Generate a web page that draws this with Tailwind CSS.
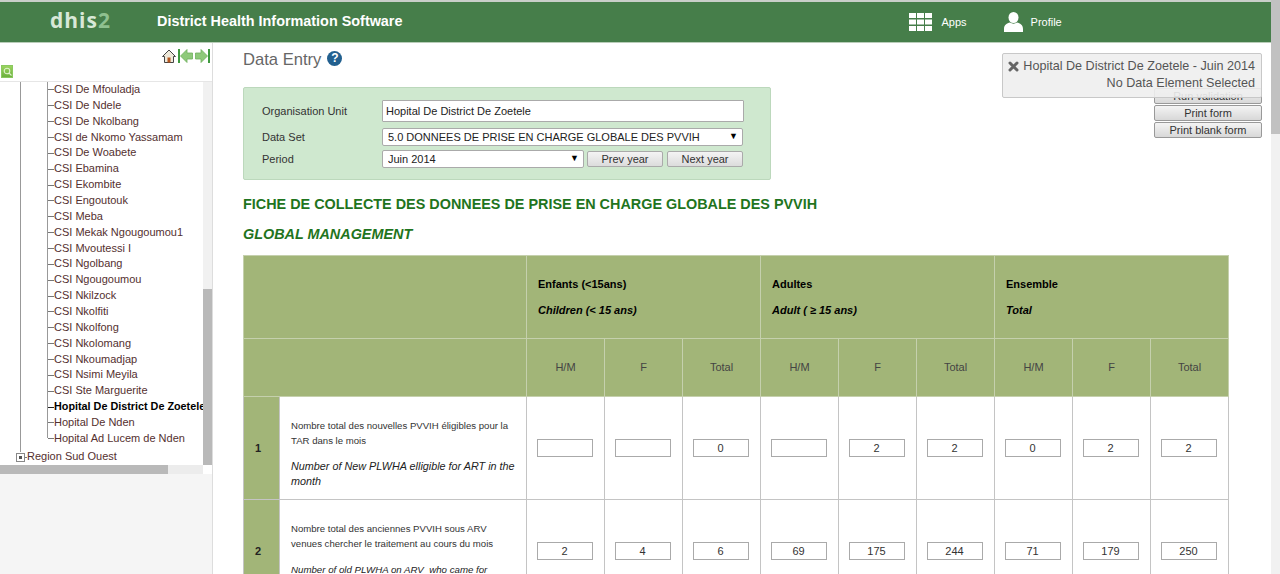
<!DOCTYPE html>
<html lang="en">
<head>
<meta charset="UTF-8">
<title>Data Entry</title>
<script src="https://cdn.jsdelivr.net/npm/@tailwindcss/browser@4"></script>
</head>
<body class="h-[574px] w-[1280px] overflow-hidden bg-white font-['Liberation_Sans',Arial,sans-serif] text-[#333] flex">

<div class="w-[1271px] shrink-0">
  <header class="h-[43px] border-t-2 border-b border-t-[#c9cfc9] border-b-[#b9cdb9] bg-[#467e4a] flex items-center text-white">
    <div class="w-[157px] pl-[50px] text-[21px] font-['Open_Sans',sans-serif] font-bold tracking-[1px] text-[#d8e8d8] -mt-[2px]">dhis<span class="text-[#8fc08f]">2</span></div>
    <div class="text-[14.4px] font-bold">District Health Information Software</div>
    <div class="ml-[507px] flex items-center gap-2">
      <svg width="23" height="18" viewBox="0 0 23 18" fill="#fff"><rect x="0" y="0" width="7" height="5"/><rect x="8" y="0" width="7" height="5"/><rect x="16" y="0" width="7" height="5"/><rect x="0" y="6.500" width="7" height="5"/><rect x="8" y="6.500" width="7" height="5"/><rect x="16" y="6.500" width="7" height="5"/><rect x="0" y="13" width="7" height="5"/><rect x="8" y="13" width="7" height="5"/><rect x="16" y="13" width="7" height="5"/></svg>
      <span class="text-[11px] ml-[1px]">Apps</span>
    </div>
    <div class="ml-[37px] flex items-center gap-[8px]">
      <svg width="19" height="20" viewBox="0 0 19 20" fill="#fff"><ellipse cx="9.500" cy="5.500" rx="5" ry="5.500"/><path d="M0 20v-3c0-4 3-6 6-6.500 2 1.500 5 1.500 7 0 3 .5 6 2.500 6 6.500v3z"/></svg>
      <span class="text-[11px]">Profile</span>
    </div>
  </header>

  <div class="flex h-[531px]">
    <aside class="w-[213px] shrink-0 border-r border-[#ddd] bg-[#f5f5f5]">
      <div class="h-[39px] bg-white border-b border-[#e6e6e6] relative">
        <div class="absolute left-[162px] top-[6px] flex items-center gap-[2px]">
          <svg width="14" height="14" viewBox="0 0 14 14"><path d="M7 1 0.500 7.500h2v6h9v-6h2z" fill="#eee9da" stroke="#444"/><rect x="5.500" y="8.500" width="3" height="5" fill="#b5561f"/></svg>
          <svg width="15" height="14" viewBox="0 0 15 14"><rect x="0" y="0" width="2" height="14" fill="#3f9a3f"/><path d="M2.500 7L9 .5v3.500h5.500v6H9v3.500z" fill="#8ec97a" stroke="#6fb05e" stroke-width=".8"/></svg>
          <svg width="15" height="14" viewBox="0 0 15 14"><rect x="13" y="0" width="2" height="14" fill="#3f9a3f"/><path d="M12.500 7L6 .5v3.500H.5v6H6v3.500z" fill="#8ec97a" stroke="#6fb05e" stroke-width=".8"/></svg>
        </div>
        <div class="absolute left-[1px] top-[22px] w-[12px] h-[13px] bg-linear-to-b from-[#9ad45e] to-[#6cb03e] border border-[#8ac860] flex items-center justify-center">
          <svg width="9" height="9" viewBox="0 0 9 9" fill="none" stroke="#dff2cc" stroke-width="1.100"><circle cx="4" cy="4" r="2.800"/><path d="M6 6l2.500 2.500"/></svg>
        </div>
      </div>
      <div class="h-[383px] flex bg-white">
        <div class="w-[203px] overflow-hidden text-[11px] leading-[15.86px] text-[#54302f] whitespace-nowrap">
          <div class="ml-[20px] h-[370px] border-l border-[#999]">
            <ul class="ml-[26px] h-[356px] border-l border-[#999]">
              <li class="h-[15.86px] flex items-center"><span class="w-[6px] shrink-0 h-px bg-[#777]"></span>CSI De Mfouladja</li>
              <li class="h-[15.86px] flex items-center"><span class="w-[6px] shrink-0 h-px bg-[#777]"></span>CSI De Ndele</li>
              <li class="h-[15.86px] flex items-center"><span class="w-[6px] shrink-0 h-px bg-[#777]"></span>CSI De Nkolbang</li>
              <li class="h-[15.86px] flex items-center"><span class="w-[6px] shrink-0 h-px bg-[#777]"></span>CSI de Nkomo Yassamam</li>
              <li class="h-[15.86px] flex items-center"><span class="w-[6px] shrink-0 h-px bg-[#777]"></span>CSI De Woabete</li>
              <li class="h-[15.86px] flex items-center"><span class="w-[6px] shrink-0 h-px bg-[#777]"></span>CSI Ebamina</li>
              <li class="h-[15.86px] flex items-center"><span class="w-[6px] shrink-0 h-px bg-[#777]"></span>CSI Ekombite</li>
              <li class="h-[15.86px] flex items-center"><span class="w-[6px] shrink-0 h-px bg-[#777]"></span>CSI Engoutouk</li>
              <li class="h-[15.86px] flex items-center"><span class="w-[6px] shrink-0 h-px bg-[#777]"></span>CSI Meba</li>
              <li class="h-[15.86px] flex items-center"><span class="w-[6px] shrink-0 h-px bg-[#777]"></span>CSI Mekak Ngougoumou1</li>
              <li class="h-[15.86px] flex items-center"><span class="w-[6px] shrink-0 h-px bg-[#777]"></span>CSI Mvoutessi I</li>
              <li class="h-[15.86px] flex items-center"><span class="w-[6px] shrink-0 h-px bg-[#777]"></span>CSI Ngolbang</li>
              <li class="h-[15.86px] flex items-center"><span class="w-[6px] shrink-0 h-px bg-[#777]"></span>CSI Ngougoumou</li>
              <li class="h-[15.86px] flex items-center"><span class="w-[6px] shrink-0 h-px bg-[#777]"></span>CSI Nkilzock</li>
              <li class="h-[15.86px] flex items-center"><span class="w-[6px] shrink-0 h-px bg-[#777]"></span>CSI Nkolfiti</li>
              <li class="h-[15.86px] flex items-center"><span class="w-[6px] shrink-0 h-px bg-[#777]"></span>CSI Nkolfong</li>
              <li class="h-[15.86px] flex items-center"><span class="w-[6px] shrink-0 h-px bg-[#777]"></span>CSI Nkolomang</li>
              <li class="h-[15.86px] flex items-center"><span class="w-[6px] shrink-0 h-px bg-[#777]"></span>CSI Nkoumadjap</li>
              <li class="h-[15.86px] flex items-center"><span class="w-[6px] shrink-0 h-px bg-[#777]"></span>CSI Nsimi Meyila</li>
              <li class="h-[15.86px] flex items-center"><span class="w-[6px] shrink-0 h-px bg-[#777]"></span>CSI Ste Marguerite</li>
              <li class="h-[15.86px] flex items-center font-bold text-black text-[10.800px]"><span class="w-[6px] shrink-0 h-px bg-[#222]"></span>Hopital De District De Zoetele</li>
              <li class="h-[15.86px] flex items-center"><span class="w-[6px] shrink-0 h-px bg-[#777]"></span>Hopital De Nden</li>
              <li class="h-[15.86px] flex items-center"><span class="w-[6px] shrink-0 h-px bg-[#777]"></span>Hopital Ad Lucem de Nden</li>
            </ul>
          </div>
          <div class="ml-[16px] -mt-[3px] h-[16px] flex items-center">
            <span class="w-[9px] h-[9px] border border-[#888] bg-white flex items-center justify-center"><span class="w-[3px] h-[3px] bg-[#555]"></span></span>
            <span class="w-[2px] h-px bg-[#777]"></span>Region Sud Ouest
          </div>
        </div>
        <div class="w-[9px] flex flex-col justify-end bg-[#f1f1f1]"><div class="h-[176px] bg-[#b9b9b9]"></div></div>
      </div>
      <div class="h-[9px] flex bg-white">
        <div class="w-[168px] bg-[#b9b9b9]"></div>
        <div class="w-[35px] bg-[#ececec]"></div>
      </div>
    </aside>

    <main class="relative flex-1 pl-[30px] overflow-hidden">
      <div class="absolute right-[9px] top-[10px] z-10 w-[260px] h-[45px] bg-[#eeeeee]/90 border border-[#c8c8c8] rounded-[2px] text-[12.6px] leading-[17px] text-right text-[#555] pt-[4px] pr-[6px]">
        <div class="flex justify-end items-center gap-[4px]">
          <svg width="11" height="11" viewBox="0 0 11 11" stroke="#666" stroke-width="3" stroke-linecap="round"><path d="M2 2l7 7M9 2l-7 7"/></svg>
          <span>Hopital De District De Zoetele - Juin 2014</span>
        </div>
        <div>No Data Element Selected</div>
      </div>

      <div class="flex justify-between pr-[9px]">
        <div class="w-[528px]">
          <div class="h-[44px] pt-[7px] flex items-start gap-[6px]">
            <h2 class="text-[16.600px] leading-[20px] text-[#666]">Data Entry</h2>
            <span class="mt-[1px] w-[15px] h-[15px] rounded-full bg-[#22608f] text-white text-[12px] leading-[15px] font-bold text-center">?</span>
          </div>
          <div class="h-[93px] bg-[#cfe8cf] border border-[#bcd8bc] rounded-[2px] pl-[18px] pt-[12px] text-[11px] text-[#333]">
            <div class="flex items-center h-[22px]">
              <label class="w-[120px]">Organisation Unit</label>
              <input class="w-[362px] h-[22px] bg-white border border-[#aaa] rounded-[1px] px-[3px] text-[11px] text-[#222]" value="Hopital De District De Zoetele">
            </div>
            <div class="flex items-center h-[18px] mt-[6px]">
              <label class="w-[120px]">Data Set</label>
              <div class="relative">
                <select class="appearance-none block w-[361px] h-[18px] bg-white border border-[#aaa] rounded-[2px] pl-[5px] text-[11px] text-[#222]"><option>5.0 DONNEES DE PRISE EN CHARGE GLOBALE DES PVVIH</option></select>
                <span class="absolute right-[5px] top-[1px] text-[9px] leading-[14px] text-black">▼</span>
              </div>
            </div>
            <div class="flex items-center h-[18px] mt-[4px]">
              <label class="w-[120px]">Period</label>
              <div class="relative">
                <select class="appearance-none block w-[202px] h-[18px] bg-white border border-[#aaa] rounded-[2px] pl-[5px] text-[11px] text-[#222]"><option>Juin 2014</option></select>
                <span class="absolute right-[5px] top-[1px] text-[9px] leading-[14px] text-black">▼</span>
              </div>
              <button class="ml-[3px] w-[76px] h-[16px] border border-[#aaa] rounded-[2px] bg-linear-to-b from-[#f4f4f4] to-[#dcdcdc] text-[11px] leading-[14px] text-[#333]">Prev year</button>
              <button class="ml-[4px] w-[76px] h-[16px] border border-[#aaa] rounded-[2px] bg-linear-to-b from-[#f4f4f4] to-[#dcdcdc] text-[11px] leading-[14px] text-[#333]">Next year</button>
            </div>
          </div>
        </div>
        <div class="w-[108px] pt-[45px] flex flex-col gap-px">
          <button class="h-[16px] border border-[#999] rounded-[2px] bg-linear-to-b from-[#f4f4f4] to-[#d8d8d8] text-[11px] leading-[14px] text-[#333]">Run validation</button>
          <button class="h-[16px] border border-[#999] rounded-[2px] bg-linear-to-b from-[#f4f4f4] to-[#d8d8d8] text-[11px] leading-[14px] text-[#333]">Print form</button>
          <button class="h-[16px] border border-[#999] rounded-[2px] bg-linear-to-b from-[#f4f4f4] to-[#d8d8d8] text-[11px] leading-[14px] text-[#333]">Print blank form</button>
        </div>
      </div>

      <h3 class="mt-[16px] text-[14.4px] leading-[16px] font-bold text-[#1f7420]">FICHE DE COLLECTE DES DONNEES DE PRISE EN CHARGE GLOBALE DES PVVIH</h3>
      <h4 class="mt-[14px] text-[14.4px] leading-[16px] font-bold italic text-[#1f7420]">GLOBAL MANAGEMENT</h4>

      <table class="mt-[13px] w-[986px] table-fixed border-collapse text-[11px] text-[#333]">
        <colgroup>
          <col class="w-[36px]"><col class="w-[247px]">
          <col class="w-[78px]"><col class="w-[78px]"><col class="w-[78px]">
          <col class="w-[78px]"><col class="w-[78px]"><col class="w-[78px]">
          <col class="w-[78px]"><col class="w-[78px]"><col class="w-[78px]">
        </colgroup>
        <tr class="h-[83px] bg-[#a2b578] text-black">
          <td colspan="2" class="border border-[#c5d0ad]"></td>
          <td colspan="3" class="border border-[#c5d0ad] pl-[11px] font-bold"><p>Enfants (&lt;15ans)</p><p class="mt-[9px] italic">Children (&lt; 15 ans)</p></td>
          <td colspan="3" class="border border-[#c5d0ad] pl-[11px] font-bold"><p>Adultes</p><p class="mt-[9px] italic">Adult ( ≥ 15 ans)</p></td>
          <td colspan="3" class="border border-[#c5d0ad] pl-[11px] font-bold"><p>Ensemble</p><p class="mt-[9px] italic">Total</p></td>
        </tr>
        <tr class="h-[58px] bg-[#a2b578] text-center text-[#444]">
          <td colspan="2" class="border border-[#c5d0ad]"></td>
          <td class="border border-[#c5d0ad]">H/M</td><td class="border border-[#c5d0ad]">F</td><td class="border border-[#c5d0ad]">Total</td>
          <td class="border border-[#c5d0ad]">H/M</td><td class="border border-[#c5d0ad]">F</td><td class="border border-[#c5d0ad]">Total</td>
          <td class="border border-[#c5d0ad]">H/M</td><td class="border border-[#c5d0ad]">F</td><td class="border border-[#c5d0ad]">Total</td>
        </tr>
        <tr class="h-[103px]">
          <td class="bg-[#a2b578] border border-[#c4c4c4] pl-[11px] font-bold text-[#222]">1</td>
          <td class="border border-[#c4c4c4] pl-[11px] pr-[4px] pt-[11px] italic text-[10.800px] leading-[15px] text-[#222]"><p class="not-italic text-[9.600px] text-[#333]">Nombre total des nouvelles PVVIH éligibles pour la TAR dans le mois</p><p class="mt-[11px]">Number of New PLWHA elligible for ART in the month</p></td>
          <td class="border border-[#c4c4c4] text-center pr-[2px]"><input class="w-[56px] h-[18px] border border-[#aaa] text-center text-[11px]" value=""></td>
          <td class="border border-[#c4c4c4] text-center pr-[2px]"><input class="w-[56px] h-[18px] border border-[#aaa] text-center text-[11px]" value=""></td>
          <td class="border border-[#c4c4c4] text-center pr-[2px]"><input class="w-[56px] h-[18px] border border-[#aaa] text-center text-[11px]" value="0"></td>
          <td class="border border-[#c4c4c4] text-center pr-[2px]"><input class="w-[56px] h-[18px] border border-[#aaa] text-center text-[11px]" value=""></td>
          <td class="border border-[#c4c4c4] text-center pr-[2px]"><input class="w-[56px] h-[18px] border border-[#aaa] text-center text-[11px]" value="2"></td>
          <td class="border border-[#c4c4c4] text-center pr-[2px]"><input class="w-[56px] h-[18px] border border-[#aaa] text-center text-[11px]" value="2"></td>
          <td class="border border-[#c4c4c4] text-center pr-[2px]"><input class="w-[56px] h-[18px] border border-[#aaa] text-center text-[11px]" value="0"></td>
          <td class="border border-[#c4c4c4] text-center pr-[2px]"><input class="w-[56px] h-[18px] border border-[#aaa] text-center text-[11px]" value="2"></td>
          <td class="border border-[#c4c4c4] text-center pr-[2px]"><input class="w-[56px] h-[18px] border border-[#aaa] text-center text-[11px]" value="2"></td>
        </tr>
        <tr class="h-[103px]">
          <td class="bg-[#a2b578] border border-[#c4c4c4] pl-[11px] font-bold text-[#222]">2</td>
          <td class="border border-[#c4c4c4] pl-[11px] pr-[4px] pt-[11px] italic text-[9.700px] leading-[15px] text-[#222]"><p class="not-italic text-[9.600px] text-[#333]">Nombre total des anciennes PVVIH sous ARV<br>venues chercher le traitement au cours du mois</p><p class="mt-[11px]">Number of old PLWHA on ARV&nbsp; who came for<br>treatment during the month</p></td>
          <td class="border border-[#c4c4c4] text-center pr-[2px]"><input class="w-[56px] h-[18px] border border-[#aaa] text-center text-[11px]" value="2"></td>
          <td class="border border-[#c4c4c4] text-center pr-[2px]"><input class="w-[56px] h-[18px] border border-[#aaa] text-center text-[11px]" value="4"></td>
          <td class="border border-[#c4c4c4] text-center pr-[2px]"><input class="w-[56px] h-[18px] border border-[#aaa] text-center text-[11px]" value="6"></td>
          <td class="border border-[#c4c4c4] text-center pr-[2px]"><input class="w-[56px] h-[18px] border border-[#aaa] text-center text-[11px]" value="69"></td>
          <td class="border border-[#c4c4c4] text-center pr-[2px]"><input class="w-[56px] h-[18px] border border-[#aaa] text-center text-[11px]" value="175"></td>
          <td class="border border-[#c4c4c4] text-center pr-[2px]"><input class="w-[56px] h-[18px] border border-[#aaa] text-center text-[11px]" value="244"></td>
          <td class="border border-[#c4c4c4] text-center pr-[2px]"><input class="w-[56px] h-[18px] border border-[#aaa] text-center text-[11px]" value="71"></td>
          <td class="border border-[#c4c4c4] text-center pr-[2px]"><input class="w-[56px] h-[18px] border border-[#aaa] text-center text-[11px]" value="179"></td>
          <td class="border border-[#c4c4c4] text-center pr-[2px]"><input class="w-[56px] h-[18px] border border-[#aaa] text-center text-[11px]" value="250"></td>
        </tr>
      </table>
    </main>
  </div>
</div>

<div class="w-[9px] h-[574px] bg-[#f1f1f1]"><div class="h-[134px] bg-[#c1c1c1]"></div></div>
</body>
</html>
